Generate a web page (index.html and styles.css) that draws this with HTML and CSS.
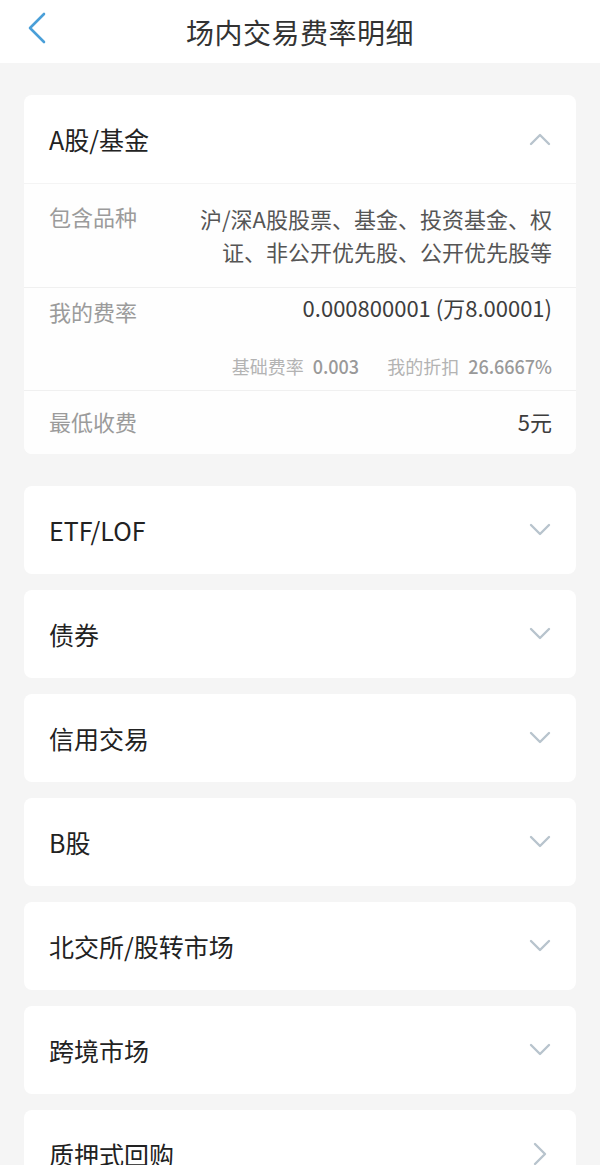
FILE: index.html
```html
<!DOCTYPE html>
<html lang="zh-CN">
<head>
  <meta charset="UTF-8" />
  <title>场内交易费率明细</title>
  <link rel="stylesheet" href="styles.css">
</head>
<body>
  <div class="topbar">
    <span class="back">
      <svg width="20" height="32" viewBox="0 0 20 32"><polyline points="17,2 3,16 17,30" fill="none" stroke="#4a9fd8" stroke-width="2.6" stroke-linecap="round" stroke-linejoin="round"/></svg>
    </span>
    <h1>场内交易费率明细</h1>
  </div>

  <div class="list">
    <div class="card">
      <div class="card-head">
        <span>A股/基金</span>
        <svg class="arrow" width="22" height="14" viewBox="0 0 22 14"><polyline points="2,12 11,3 20,12" fill="none" stroke="#b8c4cd" stroke-width="2.4" stroke-linecap="round" stroke-linejoin="round"/></svg>
      </div>
      <div class="detail">
        <div class="row kinds">
          <span class="label">包含品种</span>
          <span class="value">沪/深A股股票、基金、投资基金、权<br>证、非公开优先股、公开优先股等</span>
        </div>
        <div class="row rate">
          <div class="line">
            <span class="label">我的费率</span>
            <span class="value dark">0.000800001 (万8.00001)</span>
          </div>
          <div class="sub">
            <span class="sub-label">基础费率</span><span class="sub-value">0.003</span>
            <span class="sub-label second">我的折扣</span><span class="sub-value">26.6667%</span>
          </div>
        </div>
        <div class="row min">
          <span class="label">最低收费</span>
          <span class="value dark">5元</span>
        </div>
      </div>
    </div>

    <div class="card card-head">
      <span>ETF/LOF</span>
      <svg class="arrow" width="22" height="14" viewBox="0 0 22 14"><polyline points="2,2 11,11 20,2" fill="none" stroke="#b8c4cd" stroke-width="2.4" stroke-linecap="round" stroke-linejoin="round"/></svg>
    </div>
    <div class="card card-head">
      <span>债券</span>
      <svg class="arrow" width="22" height="14" viewBox="0 0 22 14"><polyline points="2,2 11,11 20,2" fill="none" stroke="#b8c4cd" stroke-width="2.4" stroke-linecap="round" stroke-linejoin="round"/></svg>
    </div>
    <div class="card card-head">
      <span>信用交易</span>
      <svg class="arrow" width="22" height="14" viewBox="0 0 22 14"><polyline points="2,2 11,11 20,2" fill="none" stroke="#b8c4cd" stroke-width="2.4" stroke-linecap="round" stroke-linejoin="round"/></svg>
    </div>
    <div class="card card-head">
      <span>B股</span>
      <svg class="arrow" width="22" height="14" viewBox="0 0 22 14"><polyline points="2,2 11,11 20,2" fill="none" stroke="#b8c4cd" stroke-width="2.4" stroke-linecap="round" stroke-linejoin="round"/></svg>
    </div>
    <div class="card card-head">
      <span>北交所/股转市场</span>
      <svg class="arrow" width="22" height="14" viewBox="0 0 22 14"><polyline points="2,2 11,11 20,2" fill="none" stroke="#b8c4cd" stroke-width="2.4" stroke-linecap="round" stroke-linejoin="round"/></svg>
    </div>
    <div class="card card-head">
      <span>跨境市场</span>
      <svg class="arrow" width="22" height="14" viewBox="0 0 22 14"><polyline points="2,2 11,11 20,2" fill="none" stroke="#b8c4cd" stroke-width="2.4" stroke-linecap="round" stroke-linejoin="round"/></svg>
    </div>
    <div class="card card-head">
      <span>质押式回购</span>
      <svg class="arrow right" width="16" height="24" viewBox="0 0 16 24"><polyline points="3,2 13,12 3,22" fill="none" stroke="#b8c4cd" stroke-width="2.4" stroke-linecap="round" stroke-linejoin="round"/></svg>
    </div>
  </div>
</body>
</html>
```

FILE: styles.css
```css
body {
  font-family: "Noto Sans CJK SC", "Noto Sans", sans-serif;
  background: #f5f5f5;
  margin: 0;
  color: #333;
}
.topbar {
  height: 63px;
  background: white;
  display: flex;
  align-items: center;
  justify-content: center;
  position: relative;
}
.topbar h1 {
  margin: 0;
  font-size: 28px;
  font-weight: normal;
  letter-spacing: 0.5px;
  color: #333;
}
.back {
  position: absolute;
  left: 27px;
  top: 12px;
}
.list {
  padding: 32px 24px 0;
  display: flex;
  flex-direction: column;
  gap: 16px;
}
.card {
  background: white;
  border-radius: 8px;
  overflow: hidden;
}
.list > .card:first-child {
  margin-bottom: 16px;
}
.card-head {
  height: 88px;
  padding: 0 25px 0 25px;
  display: flex;
  align-items: center;
  justify-content: space-between;
  font-size: 25px;
  color: #222;
  box-sizing: border-box;
}
.card-head .arrow.right {
  margin-right: 3px;
}
.detail {
  border-top: 1px solid #f4f4f4;
  background: #fefefe;
}
.row {
  padding: 0 24px 0 25px;
  border-bottom: 1px solid #f0f0f0;
}
.row:last-child {
  border-bottom: none;
}
.label {
  font-size: 22px;
  color: #9b9b9b;
  line-height: 33px;
  white-space: nowrap;
}
.value {
  font-size: 22px;
  color: #555;
  line-height: 33px;
  text-align: right;
}
.value.dark {
  color: #3d3d3d;
}
.kinds {
  display: flex;
  justify-content: space-between;
  padding-top: 18px;
  padding-bottom: 19px;
}
.kinds .label {
  margin-top: -2px;
}
.rate {
  padding-top: 7px;
  padding-bottom: 12px;
}
.rate .line {
  display: flex;
  justify-content: space-between;
}
.rate .line .value {
  margin-top: -4px;
}
.sub {
  margin-top: 26px;
  text-align: right;
  line-height: 24px;
  font-size: 18px;
}
.sub-label {
  color: #b3b3b3;
  margin-right: 9px;
}
.sub-label.second {
  margin-left: 24px;
}
.sub-value {
  color: #999;
  font-weight: 500;
}
.min {
  display: flex;
  justify-content: space-between;
  padding-top: 14px;
  padding-bottom: 16px;
}
```
